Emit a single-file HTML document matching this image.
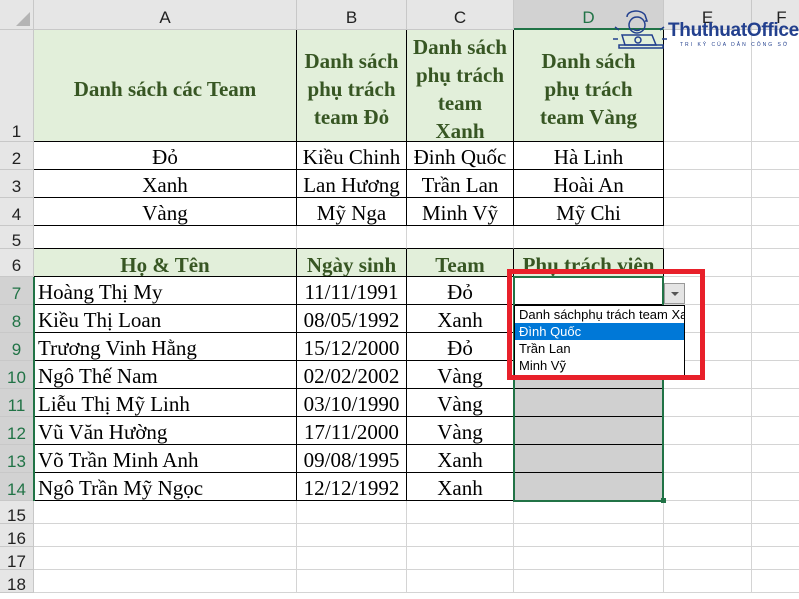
<!DOCTYPE html>
<html><head><meta charset="utf-8"><style>
*{margin:0;padding:0;box-sizing:border-box}
body{width:799px;height:585px;overflow:hidden;background:#fff;position:relative;font-family:"Liberation Serif",serif}
.a{position:absolute}
.ch{position:absolute;top:0;height:30px;background:#e6e6e6;border-right:1px solid #c8c8c8;border-bottom:1px solid #c8c8c8;font:17px "Liberation Sans",sans-serif;color:#222;text-align:center;line-height:36px}
.rh{position:absolute;left:0;width:34px;background:#e6e6e6;border-bottom:1px solid #c8c8c8;border-right:1px solid #c8c8c8;font:17px "Liberation Sans",sans-serif;color:#222;text-align:center}
.c{position:absolute;border-right:1px solid #d4d4d4;border-bottom:1px solid #d4d4d4;font-size:21px;color:#000;white-space:nowrap;overflow:hidden;display:flex;align-items:center;justify-content:center;padding-top:4px}
.b{border-right:1px solid #000;border-bottom:1px solid #000}
.h{background:#e2efda;color:#375623;font-weight:bold;text-align:center;line-height:28px;white-space:nowrap}
.l{justify-content:flex-start;padding-left:4px}
</style></head><body>
<div class="ch" style="left:0;width:34px"></div>
<div class="a" style="left:16px;top:12px;width:0;height:0;border-left:14px solid transparent;border-bottom:14px solid #b4b4b4"></div>
<div class="ch" style="left:34px;width:263px">A</div>
<div class="ch" style="left:297px;width:110px">B</div>
<div class="ch" style="left:407px;width:107px">C</div>
<div class="ch" style="left:514px;width:150px;background:#d2d2d2;border-bottom:2px solid #217346;color:#217346">D</div>
<div class="ch" style="left:664px;width:88px">E</div>
<div class="ch" style="left:752px;width:60px">F</div>
<div id="g"></div>
<script>
var rows=[[30,112],[142,28],[170,28],[198,28],[226,23],[249,28],[277,28],[305,28],[333,28],[361,28],[389,28],[417,28],[445,28],[473,28],[501,23],[524,23],[547,23],[570,23]];
var cols=[[34,263],[297,110],[407,107],[514,150],[664,88],[752,60]];
var d={
1:['Danh sách các Team','Danh sách<br>phụ trách<br>team Đỏ','Danh sách<br>phụ trách<br>team<br>Xanh','Danh sách<br>phụ trách<br>team Vàng'],
2:['Đỏ','Kiều Chinh','Đinh Quốc','Hà Linh'],3:['Xanh','Lan Hương','Trần Lan','Hoài An'],4:['Vàng','Mỹ Nga','Minh Vỹ','Mỹ Chi'],
6:['Họ &amp; Tên','Ngày sinh','Team','Phụ trách viên'],
7:['Hoàng Thị My','11/11/1991','Đỏ',''],8:['Kiều Thị Loan','08/05/1992','Xanh',''],9:['Trương Vinh Hằng','15/12/2000','Đỏ',''],
10:['Ngô Thế Nam','02/02/2002','Vàng',''],11:['Liễu Thị Mỹ Linh','03/10/1990','Vàng',''],12:['Vũ Văn Hường','17/11/2000','Vàng',''],
13:['Võ Trần Minh Anh','09/08/1995','Xanh',''],14:['Ngô Trần Mỹ Ngọc','12/12/1992','Xanh','']};
var h='';
rows.forEach(function(r,i){var n=i+1;var sel=n>=7&&n<=14;
h+='<div class="rh" style="top:'+r[0]+'px;height:'+r[1]+'px;line-height:'+(n==1?r[1]*2-20:r[1]+6)+'px;'+(sel?'background:#d2d2d2;color:#217346;':'')+'">'+n+'</div>';
cols.forEach(function(c,j){var t=d[n]&&j<4?d[n][j]:'';var cls='c';var st='';
if(d[n]&&j<4){cls+=' b';if(n==1||n==6)cls+=' h';else if(j==0&&n>=7)cls+=' l';}
if(n==5&&j<4)st+='border-bottom:1px solid #000;';
if(n==6&&j<4)st+='line-height:24px;';
if(j==3&&n>=8&&n<=14)st+='background:#d0d0d0;';
if(n==1)st+='padding-top:6px;';
h+='<div class="'+cls+'" style="left:'+c[0]+'px;top:'+r[0]+'px;width:'+c[1]+'px;height:'+r[1]+'px;'+st+'">'+t+'</div>';});});
document.getElementById('g').innerHTML=h;
</script>
<div class="a" style="left:33px;top:277px;width:2px;height:224px;background:#217346"></div>
<div class="a" style="left:513px;top:276px;width:151px;height:226px;border:2px solid #217346"></div>
<div class="a" style="left:661px;top:498px;width:5px;height:5px;background:#217346"></div>
<div class="a" style="left:664px;top:283px;width:21px;height:21px;background:#e4e4e4;border:1px solid #999"><div class="a" style="left:6px;top:8px;border-left:4px solid transparent;border-right:4px solid transparent;border-top:4px solid #555"></div></div>
<div class="a" style="left:514px;top:305px;width:171px;height:71px;background:#fff;border:1px solid #000;font:13px 'Liberation Sans',sans-serif;color:#000;overflow:hidden">
<div style="height:17px;line-height:17px;padding-left:4px;white-space:nowrap">Danh sáchphụ trách team Xanh</div>
<div style="height:17px;line-height:17px;padding-left:4px;background:#0078d7;color:#fff">Đình Quốc</div>
<div style="height:17px;line-height:17px;padding-left:4px">Trần Lan</div>
<div style="height:17px;line-height:17px;padding-left:4px">Minh Vỹ</div></div>
<div class="a" style="left:507px;top:269px;width:198px;height:111px;border:5px solid #e8202a"></div>
<svg class="a" style="left:605px;top:5px" width="70" height="60" viewBox="0 0 70 60" fill="none" stroke="#23408e" stroke-width="1.5">
<path d="M22 12c0-7 14-8 18-2l2 6-2 0"/><circle cx="32" cy="20" r="8"/><path d="M28 24q4 3 8 0"/><path d="M20 40l-3 -10h30l4 10z"/><path d="M14 40h44v3H14z"/><circle cx="33" cy="35" r="3"/><path d="M10 22l4 3M8 34h5M55 25l4-3M57 34h5"/></svg>
<div class="a" style="left:668px;top:20px;font:bold 19px 'Liberation Sans',sans-serif;color:#23408e;letter-spacing:-0.3px">ThuthuatOffice</div>
<div class="a" style="left:680px;top:42px;font:5px 'Liberation Sans',sans-serif;color:#23408e;letter-spacing:2px">TRI KỶ CỦA DÂN CÔNG SỞ</div>
</body></html>
